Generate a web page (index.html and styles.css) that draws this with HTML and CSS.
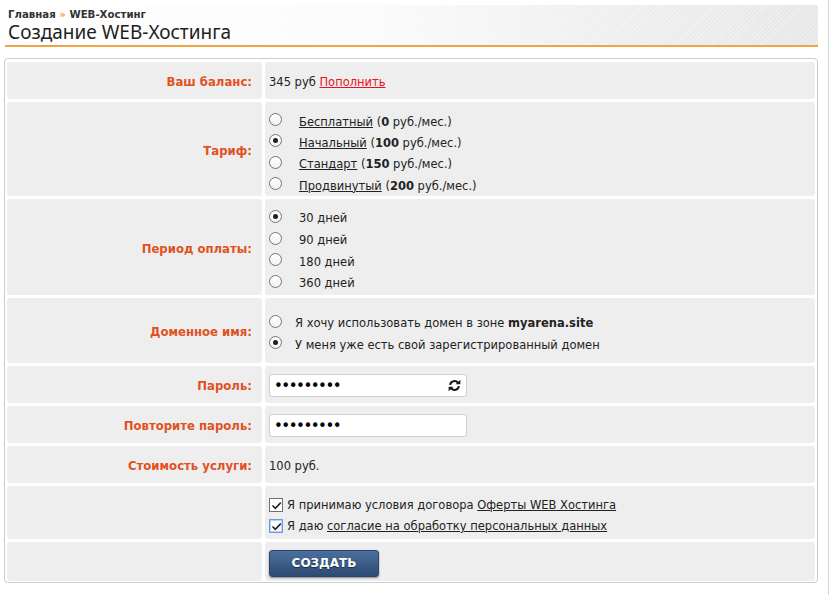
FILE: index.html
```html
<!DOCTYPE html>
<html lang="ru">
<head>
<meta charset="utf-8">
<title>Создание WEB-Хостинга</title>
<link rel="stylesheet" href="styles.css">
</head>
<body>
<div class="page">
  <header class="head">
    <div class="crumbs"><a href="#" class="crumb">Главная</a> <span class="sep">»</span> <span class="crumb">WEB-Хостинг</span></div>
    <h1 class="title">Создание WEB-Хостинга</h1>
  </header>

  <form class="box">
    <div class="grid">
      <div class="lbl">Ваш баланс:</div>
      <div class="val">345 руб&nbsp;<a href="#" class="red">Пополнить</a></div>

      <div class="lbl">Тариф:</div>
      <div class="val top p-tariff">
        <ul class="opts wide">
          <li><span class="radio"></span><span><a href="#" class="dark">Бесплатный</a> (<b>0</b> руб./мес.)</span></li>
          <li><span class="radio on"></span><span><a href="#" class="dark">Начальный</a> (<b>100</b> руб./мес.)</span></li>
          <li><span class="radio"></span><span><a href="#" class="dark">Стандарт</a> (<b>150</b> руб./мес.)</span></li>
          <li><span class="radio"></span><span><a href="#" class="dark">Продвинутый</a> (<b>200</b> руб./мес.)</span></li>
        </ul>
      </div>

      <div class="lbl">Период оплаты:</div>
      <div class="val top p-period">
        <ul class="opts wide period">
          <li><span class="radio on"></span><span>30 дней</span></li>
          <li><span class="radio"></span><span>90 дней</span></li>
          <li><span class="radio"></span><span>180 дней</span></li>
          <li><span class="radio"></span><span>360 дней</span></li>
        </ul>
      </div>

      <div class="lbl">Доменное имя:</div>
      <div class="val top p-domain">
        <ul class="opts domain">
          <li><span class="radio"></span><span>Я хочу использовать домен в зоне <b>myarena.site</b></span></li>
          <li><span class="radio on"></span><span>У меня уже есть свой зарегистрированный домен</span></li>
        </ul>
      </div>

      <div class="lbl">Пароль:</div>
      <div class="val">
        <div class="field">
          <input type="password" class="pass" value="qwerty123">
          <svg class="refresh" width="13" height="13" viewBox="0 0 16 16" aria-hidden="true">
            <path d="M2.6 7.2 A5.4 5.4 0 0 1 12.2 4.6" fill="none" stroke="#1a1a1a" stroke-width="2.6"/>
            <polygon points="9.4,6.6 15.2,6.6 15.2,0.8" fill="#1a1a1a"/>
            <path d="M13.4 8.8 A5.4 5.4 0 0 1 3.8 11.4" fill="none" stroke="#1a1a1a" stroke-width="2.6"/>
            <polygon points="6.6,9.4 0.8,9.4 0.8,15.2" fill="#1a1a1a"/>
          </svg>
        </div>
      </div>

      <div class="lbl">Повторите пароль:</div>
      <div class="val">
        <div class="field">
          <input type="password" class="pass" value="qwerty123">
        </div>
      </div>

      <div class="lbl">Стоимость услуги:</div>
      <div class="val">100 руб.</div>

      <div class="lbl"></div>
      <div class="val top p-checks">
        <ul class="opts checks">
          <li><span class="check"><svg width="11" height="11" viewBox="0 0 11 11"><path d="M1.5 5.5 L4.3 8.3 L9.8 2.6" fill="none" stroke="#222" stroke-width="1.6"/></svg></span><span>Я принимаю условия договора <a href="#" class="dark">Оферты WEB Хостинга</a></span></li>
          <li><span class="check focus"><svg width="11" height="11" viewBox="0 0 11 11"><path d="M1.5 5.5 L4.3 8.3 L9.8 2.6" fill="none" stroke="#222" stroke-width="1.6"/></svg></span><span>Я даю <a href="#" class="dark">согласие на обработку персональных данных</a></span></li>
        </ul>
      </div>

      <div class="lbl"></div>
      <div class="val">
        <button type="button" class="btn">СОЗДАТЬ</button>
      </div>
    </div>
  </form>
</div>
</body>
</html>
```
FILE: styles.css
```css
html, body {
  margin: 0;
  padding: 0;
  background: #fff;
}

body {
  font-family: "DejaVu Sans", Verdana, sans-serif;
  font-size: 11.5px;
  color: #222;
}

.page {
  width: 823px;
  height: 590px;
  padding: 5px 0 0 5px;
  border-right: 1px solid #d4d4d4;
}

.head {
  width: 813px;
  height: 42px;
  box-sizing: border-box;
  border-bottom: 2px solid #f0a445;
  background:
    repeating-linear-gradient(-45deg, rgba(255,255,255,0) 0 2px, rgba(255,255,255,0.35) 2px 3px),
    linear-gradient(to right, #ffffff 0%, #fbfbfb 45%, #eeeeee 75%, #e7e7e7 100%);
  padding: 0 0 0 3px;
}

.crumbs {
  padding-top: 4px;
  font-family: "DejaVu Sans", Verdana, sans-serif;
  font-size: 10.2px;
  font-weight: bold;
  line-height: 12px;
  color: #333;
}

.crumb {
  color: #333;
  text-decoration: none;
}

.sep {
  color: #f0a040;
}

.title {
  margin: 0;
  font-family: "Noto Sans", "DejaVu Sans", sans-serif;
  font-size: 19px;
  font-weight: normal;
  line-height: 23px;
  color: #1e1e1e;
}

.box {
  display: block;
  margin: 11px 0 0 -1px;
  width: 814px;
  border: 1px solid #cccccc;
  border-radius: 4px;
  box-sizing: border-box;
}

.grid {
  display: grid;
  grid-template-columns: 255px 550px;
  grid-template-rows: 37px 94px 96px 65px 37px 37px 37px 53px 39px;
  gap: 3px;
  padding: 3px 2px 1px 2px;
}

.lbl, .val {
  background: #eeeeee;
  border-radius: 3px;
  display: flex;
  align-items: center;
}

.lbl {
  justify-content: flex-end;
  padding-right: 10px;
  padding-top: 3px;
  font-weight: bold;
  color: #e1511f;
  font-size: 11.7px;
}

.val {
  padding-left: 4px;
  padding-top: 2px;
}

.val.top {
  align-items: flex-start;
}

.val.p-tariff { padding-top: 9px; }
.val.p-period { padding-top: 8.5px; }
.val.p-domain { padding-top: 14.5px; }
.val.p-checks { padding-top: 8.5px; }

.red {
  color: #e8131c;
}

.dark {
  color: #222;
}

.opts {
  list-style: none;
  margin: 0;
  padding: 0;
}

.opts li {
  display: flex;
  align-items: center;
  height: 21.3px;
}

.opts.period li {
  height: 21.7px;
}

.opts.domain li {
  height: 21.5px;
  gap: 13px;
}

.opts.wide li {
  gap: 17px;
}

.opts.checks li {
  height: 21px;
  gap: 4px;
}

.radio {
  width: 11px;
  height: 11px;
  border: 1px solid #767676;
  border-radius: 50%;
  background: linear-gradient(#ffffff, #f2f2f2);
  flex: none;
  display: flex;
  align-items: center;
  justify-content: center;
  position: relative;
  top: -2px;
}

.radio.on::after {
  content: "";
  width: 5px;
  height: 5px;
  border-radius: 50%;
  background: #1f1f1f;
}

.check {
  width: 12px;
  height: 12px;
  border: 1px solid #6f6f6f;
  background: #fff;
  flex: none;
  display: flex;
  align-items: center;
  justify-content: center;
}

.check.focus {
  border-color: #6a9be0;
  box-shadow: 0 0 0 1px #b8d2f5 inset;
}

.field {
  width: 198px;
  height: 23px;
  box-sizing: border-box;
  border: 1px solid #cfcfcf;
  border-radius: 3px;
  background: #fff;
  display: flex;
  align-items: center;
  padding: 0 4px;
}

.pass {
  flex: 1;
  min-width: 0;
  border: 0;
  outline: 0;
  padding: 0;
  margin: 0;
  background: transparent;
  font-family: "DejaVu Sans", sans-serif;
  font-size: 15px;
  letter-spacing: -1.5px;
  color: #000;
  height: 20px;
}

.refresh {
  flex: none;
  margin-right: 1px;
}

.btn {
  width: 110px;
  height: 27px;
  margin-top: 1px;
  border: 1px solid #2b4467;
  border-radius: 3px;
  background: linear-gradient(#4b6f9d, #2c4b74);
  box-shadow: 0 1px 2px rgba(0,0,0,0.45);
  color: #fff;
  font-family: "DejaVu Sans", Verdana, sans-serif;
  font-size: 12px;
  font-weight: bold;
  text-shadow: 0 1px 1px rgba(0,0,0,0.5);
  padding: 0;
  cursor: pointer;
}
```
